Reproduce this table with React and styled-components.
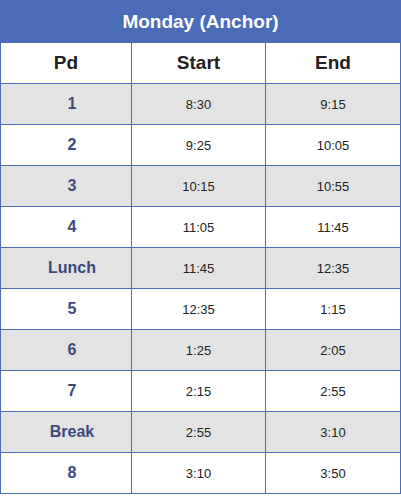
import styled, { createGlobalStyle } from "styled-components";

const GlobalStyle = createGlobalStyle`
  body {
    margin: 0;
    background: #ffffff;
    font-family: "Liberation Sans", Arial, sans-serif;
  }
`;

const Table = styled.table`
  width: 400px;
  border-collapse: collapse;
  table-layout: fixed;
`;

const Title = styled.th`
  height: 41px;
  padding: 0;
  background: #4a6bb5;
  border: 1px solid #4a6bb5;
  color: #ffffff;
  font-size: 19px;
  font-weight: 700;
  text-align: center;
`;

const HeadCell = styled.th`
  height: 40px;
  padding: 0;
  border: 1px solid #4a6bb5;
  color: #222222;
  font-size: 19px;
  font-weight: 700;
  text-align: center;
`;

const Row = styled.tr`
  background: ${(props) => (props.$shaded ? "#e3e3e3" : "#ffffff")};
`;

const PdCell = styled.td`
  height: 40px;
  padding: 0 0 0 12px;
  border: 1px solid #4a6bb5;
  color: #3a4a7c;
  font-size: 16px;
  font-weight: 700;
  text-align: center;
`;

const TimeCell = styled.td`
  height: 40px;
  padding: 0;
  border: 1px solid #4a6bb5;
  color: #222222;
  font-size: 13px;
  text-align: center;
`;

const periods = [
  ["1", "8:30", "9:15"],
  ["2", "9:25", "10:05"],
  ["3", "10:15", "10:55"],
  ["4", "11:05", "11:45"],
  ["Lunch", "11:45", "12:35"],
  ["5", "12:35", "1:15"],
  ["6", "1:25", "2:05"],
  ["7", "2:15", "2:55"],
  ["Break", "2:55", "3:10"],
  ["8", "3:10", "3:50"],
];

const App = () => {
  return (
    <>
      <GlobalStyle />
      <Table>
        <colgroup>
          <col style={{ width: 131 }} />
          <col style={{ width: 134 }} />
          <col style={{ width: 135 }} />
        </colgroup>
        <thead>
          <tr>
            <Title colSpan={3}>Monday (Anchor)</Title>
          </tr>
          <tr>
            <HeadCell>Pd</HeadCell>
            <HeadCell>Start</HeadCell>
            <HeadCell>End</HeadCell>
          </tr>
        </thead>
        <tbody>
          {periods.map((p, i) => (
            <Row key={p[0]} $shaded={i % 2 === 0}>
              <PdCell>{p[0]}</PdCell>
              <TimeCell>{p[1]}</TimeCell>
              <TimeCell>{p[2]}</TimeCell>
            </Row>
          ))}
        </tbody>
      </Table>
    </>
  );
};

export default App;
